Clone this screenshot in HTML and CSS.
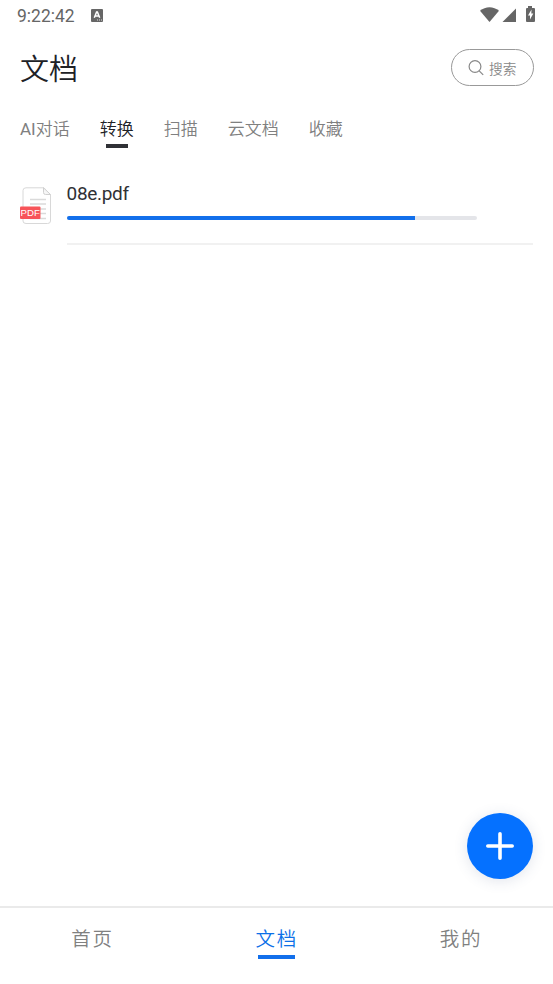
FILE: index.html
```html
<!DOCTYPE html>
<html lang="zh-CN">
<head>
<meta charset="utf-8">
<title>文档</title>
<link rel="stylesheet" href="styles.css">
</head>
<body>
<div class="app">
  <div class="status">
    <span class="clock">9:22:42</span>
    <svg class="ime" width="12" height="13" viewBox="0 0 12 13"><rect width="12" height="13" rx="1" fill="#666"/><path d="M3.300 8.800 5.600 3h.8L8.700 8.800M4 7h4" fill="none" stroke="#fff" stroke-width="1.500"/><path d="M6 11h1M8 11h1M10 11h1" stroke="#ddd"/></svg>
    <svg class="signals" width="56" height="17" viewBox="0 0 56 17"><path d="M0 4.700C5.500 0 13.500 0 19 4.700L9.500 16Z"/><path d="M36 2.500V16H22.500Z"/><path d="M48 0h4v2h2q1 0 1 1v12q0 1-1 1h-7q-1 0-1-1V3q0-1 1-1h1Z"/><path d="M51.500 3.500 48 9.500h2v4l3.300-6h-2Z" fill="#fff"/></svg>
  </div>
  <header class="header">
    <h1>文档</h1>
    <button class="search"><svg width="16" height="16" viewBox="0 0 16 16"><circle cx="7" cy="6.500" r="5.900"/><path d="m11.200 10.800 4 4"/></svg><span>搜索</span></button>
  </header>
  <nav class="tabs">
    <span><span class="latin">AI</span>对话</span><span class="current">转换</span><span>扫描</span><span>云文档</span><span>收藏</span>
  </nav>
  <main>
    <div class="file">
      <svg class="file-icon" width="32" height="38" viewBox="0 0 32 38"><path d="M6 .8h18l6.500 7.200V34q0 2.500-3 2.500H6q-3 0-3-2.500V3.500Q3 .8 6 .8Z" fill="#fff" stroke="#d8d8d8"/><path d="M23.500 .8V5.500q0 2 2 2h5Z" fill="#f6f6f6" stroke="#d0d0d0"/><path d="M10 12.500h16M10 17h16M20 22h6M20 26.500h6M10 31.500h16" stroke="#dadada" stroke-width="1.300"/><rect y="19.500" width="20.500" height="12.500" rx="1" fill="#f75459"/><text x="10.200" y="29" text-anchor="middle" class="pdf">PDF</text></svg>
      <div class="file-body">
        <div class="file-name">08e.pdf</div>
        <div class="progress"><div class="bar" style="width:85%"></div></div>
      </div>
    </div>
  </main>
  <button class="fab" aria-label="新建"><svg width="28" height="28" viewBox="0 0 28 28"><path d="M14 1.800v24.400M1.800 14h24.400"/></svg></button>
  <nav class="bottom">
    <span>首页</span><span class="current">文档</span><span>我的</span>
  </nav>
</div>
</body>
</html>
```
FILE: styles.css
```css
* { box-sizing: border-box; }
body { margin: 0; background: #fff; font-family: Roboto, "Noto Sans CJK SC", sans-serif; font-weight: 350; }
svg { display: block; flex: none; }
button { font: inherit; padding: 0; }
.app { position: relative; height: 984px; display: flex; flex-direction: column; overflow: hidden; }
.status { height: 30px; display: flex; align-items: flex-start; padding: 0 17px; }
.clock { width: 74px; font-size: 17.5px; line-height: 32px; font-weight: 400; color: #666; }
.ime { margin-top: 9px; }
.signals { margin: 6px 0 0 auto; fill: #666; }
.header { height: 75px; display: flex; align-items: center; justify-content: space-between; padding: 0 19.5px 0 20px; }
h1 { margin: 4px 0 0; font-size: 29px; line-height: 40px; font-weight: 350; color: #202126; }
.search { width: 82.5px; height: 37px; display: flex; align-items: center; justify-content: center; gap: 5px; border: 1px solid #999; border-radius: 19px; background: #fff; color: #888; font-size: 13.7px; }
.search svg { fill: none; stroke: #888; stroke-width: 1.2; }
.tabs { height: 65px; padding: 12px 20px 0; display: flex; align-items: flex-start; gap: 30px; font-size: 17px; line-height: 25px; color: #808080; }
.latin { font-weight: 400; }
.tabs .current { color: #202126; }
.tabs .current::after { content: ""; display: block; width: 22px; height: 4px; margin: 2px auto 0; background: #303136; }
main { flex: 1; padding: 0 20px; }
.file { display: flex; gap: 14.5px; height: 75px; }
.file-icon { margin-top: 17px; }
.pdf { font: 400 9.6px "Liberation Sans", sans-serif; fill: #fff; }
.file-body { flex: 1; padding-top: 12px; border-bottom: 2px solid #f1f1f1; }
.file-name { font-size: 19px; line-height: 24px; font-weight: 400; letter-spacing: -.3px; color: #303135; }
.progress { width: 410.5px; height: 4px; margin-top: 10px; border-radius: 2px; background: #e4e5e9; overflow: hidden; }
.bar { height: 100%; background: #126feb; }
.fab { position: absolute; right: 20px; top: 813px; width: 66px; height: 66px; display: flex; align-items: center; justify-content: center; border: 0; border-radius: 50%; background: #0571ff; box-shadow: 0 2px 14px rgba(60, 80, 130, .15); }
.fab path { stroke: #fff; stroke-width: 3.6; stroke-linecap: round; }
.bottom { height: 78px; display: grid; grid-template-columns: repeat(3, 1fr); justify-items: center; border-top: 2px solid #eaeaea; padding-top: 18px; font-size: 19.5px; line-height: 28px; letter-spacing: 1.8px; text-indent: .6px; color: #808080; }
.bottom .current { color: #0c70e8; }
.bottom .current::after { content: ""; display: block; width: 37px; height: 4px; margin: 1px auto 0; background: #126feb; }
```
